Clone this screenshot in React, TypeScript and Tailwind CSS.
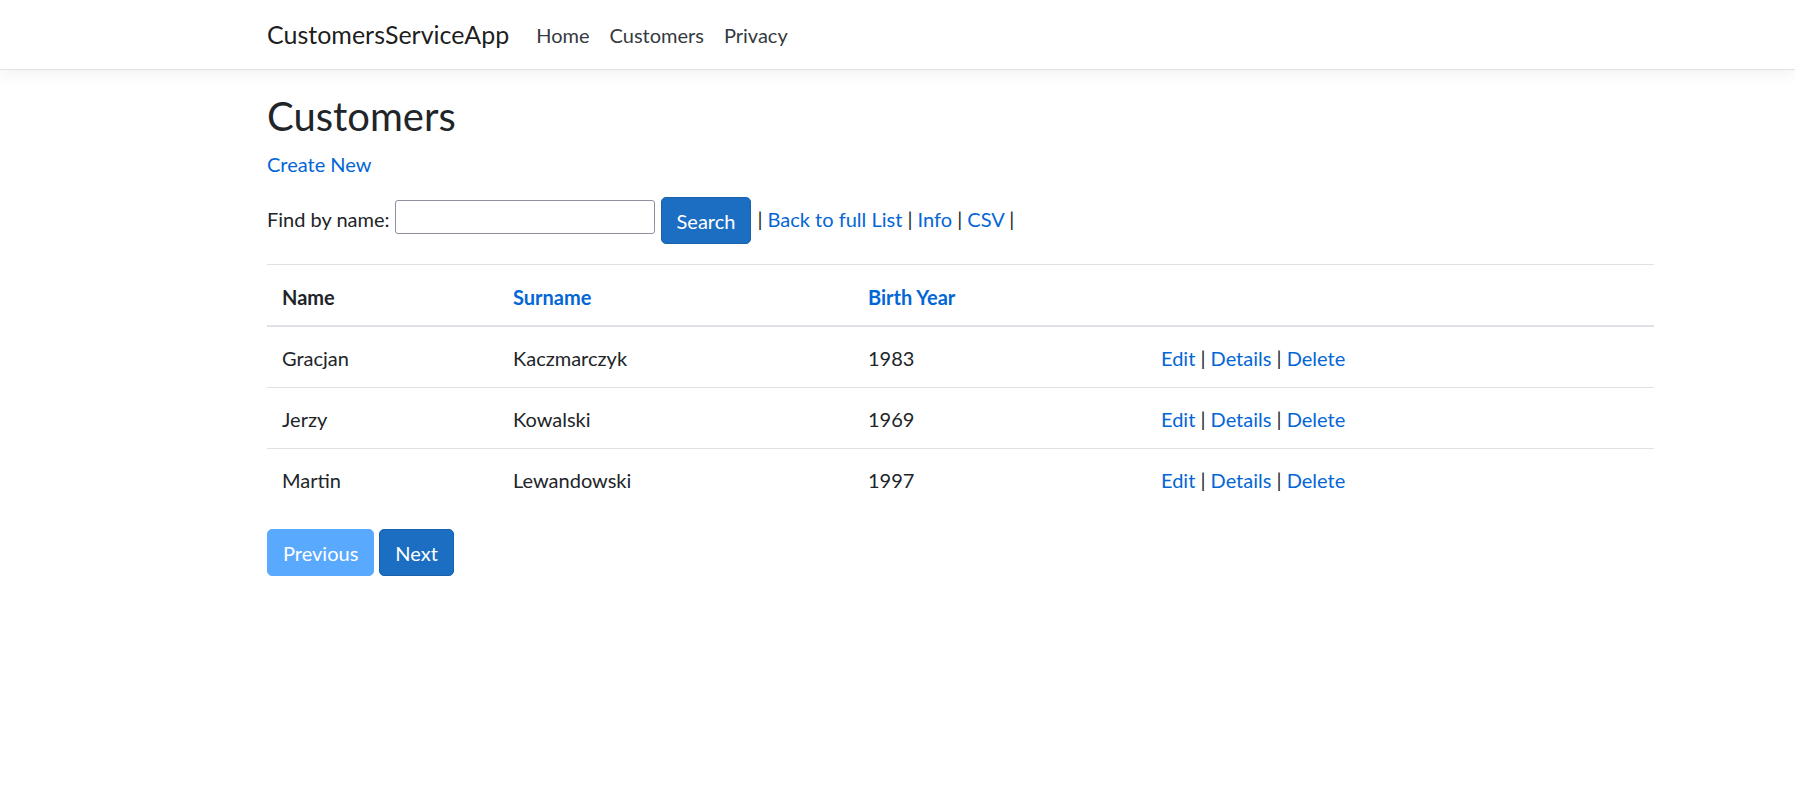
import React from "react";

const customers = [
  { name: "Gracjan", surname: "Kaczmarczyk", year: 1983 },
  { name: "Jerzy", surname: "Kowalski", year: 1969 },
  { name: "Martin", surname: "Lewandowski", year: 1997 },
];

const link = "text-[#0366d6] hover:underline cursor-pointer";
const th = "text-left font-bold px-[15px] pt-[17px] pb-[13px] border-t border-b-2 border-[#dee2e6]";

export default function App() {
  return (
    <div className="min-h-screen bg-white text-[#212529] font-['Lato',sans-serif] text-[20px] leading-[30px]">
      {/* Navbar */}
      <header className="h-[70px] bg-white border-b border-[#dee2e6] shadow-[0_5px_15px_rgba(0,0,0,0.05)]">
        <nav className="h-full pl-[267px] flex items-center">
          <a className="text-[25px] leading-[37px] text-[rgba(0,0,0,0.9)] mr-[17px]">CustomersServiceApp</a>
          <ul className="flex">
            {["Home", "Customers", "Privacy"].map(item => (
              <li key={item}>
                <a className="px-[10px] text-[#343a40] cursor-pointer">{item}</a>
              </li>
            ))}
          </ul>
        </nav>
      </header>

      <main className="pl-[267px] pt-[22px]">
        <div className="w-[1387px]">
          <h2 className="text-[40px] leading-[48px] font-normal mb-[9px]">Customers</h2>
          <p className="mb-[18px]">
            <a className={link}>Create New</a>
          </p>

          {/* Search */}
          <form className="flex items-start mb-[20px]" onSubmit={e => e.preventDefault()}>
            <span className="mt-[7px]">Find by name:</span>
            <input
              type="text"
              className="ml-[5px] mt-[3px] w-[260px] h-[34px] border border-[#8f8f9d] rounded-[3px] px-[4px] text-[18px] outline-none"
            />
            <button
              type="submit"
              className="ml-[6px] h-[47px] px-[15px] bg-[#1b6ec2] border border-[#1861ac] rounded-[5px] text-white"
            >
              Search
            </button>
            <span className="mt-[7px] ml-[6px] whitespace-pre">
              | <a className={link}>Back to full List</a> | <a className={link}>Info</a> | <a className={link}>CSV</a> |
            </span>
          </form>

          {/* Table */}
          <table className="w-full border-separate border-spacing-0 mb-[20px]">
            <colgroup>
              <col className="w-[231px]" />
              <col className="w-[355px]" />
              <col className="w-[293px]" />
              <col className="w-[508px]" />
            </colgroup>
            <thead>
              <tr>
                <th className={th}>Name</th>
                <th className={th}>
                  <a className={link}>Surname</a>
                </th>
                <th className={th}>
                  <a className={link}>Birth Year</a>
                </th>
                <th className={th}></th>
              </tr>
            </thead>
            <tbody>
              {customers.map((c, i) => {
                const td =
                  i === 0
                    ? "px-[15px] pt-[16px] pb-[14px]"
                    : "px-[15px] pt-[16px] pb-[14px] border-t border-[#dee2e6]";
                return (
                  <tr key={c.name}>
                    <td className={td}>{c.name}</td>
                    <td className={td}>{c.surname}</td>
                    <td className={td}>{c.year}</td>
                    <td className={td}>
                      <a className={link}>Edit</a> | <a className={link}>Details</a> | <a className={link}>Delete</a>
                    </td>
                  </tr>
                );
              })}
            </tbody>
          </table>

          {/* Pagination */}
          <div className="flex gap-[5px]">
            <button className="h-[47px] px-[15px] bg-[#59a9ff] border border-[#59a9ff] rounded-[5px] text-white cursor-default">
              Previous
            </button>
            <button className="h-[47px] px-[15px] bg-[#1b6ec2] border border-[#1861ac] rounded-[5px] text-white">
              Next
            </button>
          </div>
        </div>
      </main>
    </div>
  );
}
